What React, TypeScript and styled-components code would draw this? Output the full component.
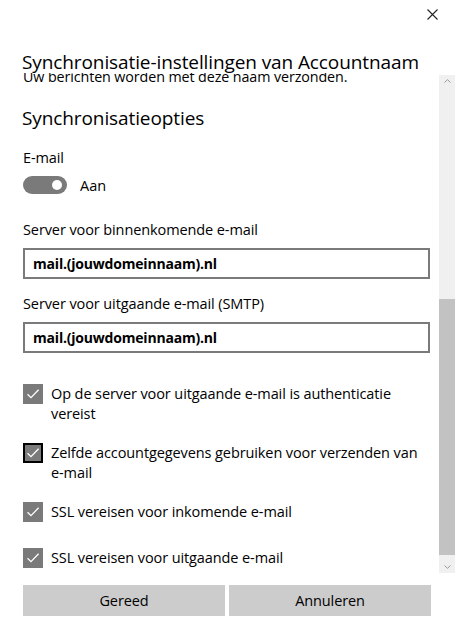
import * as React from 'react';
import styled, { createGlobalStyle } from 'styled-components';

const GlobalStyle = createGlobalStyle`
  html, body {
    margin: 0;
    padding: 0;
    background: #ffffff;
  }
  body {
    font-family: 'Open Sans', 'Noto Sans', sans-serif;
    color: #000000;
  }
`;

const Page = styled.div`
  width: 455px;
  height: 626px;
  display: flex;
  flex-direction: column;
  background: #ffffff;
  overflow: hidden;
`;

const TopBar = styled.div`
  height: 28px;
  display: flex;
  justify-content: flex-end;
  align-items: center;
  padding-right: 16px;
`;

const CloseButton = styled.button`
  width: 14px;
  height: 14px;
  padding: 0;
  border: none;
  background: transparent;
  display: flex;
  align-items: center;
  justify-content: center;
`;

const Title = styled.h1`
  margin: 22px 0 0 22px;
  font-size: 19px;
  font-weight: 400;
  line-height: 24px;
  height: 23px;
  letter-spacing: -0.1px;
  white-space: nowrap;
`;

const Body = styled.div`
  display: flex;
  height: 500px;
`;

const Viewport = styled.div`
  flex: 1;
  overflow: hidden;
  padding-left: 23px;
  padding-right: 9px;
`;

const Scrolled = styled.div`
  margin-top: -5px;
`;

const Hint = styled.p`
  margin: 0;
  font-size: 14.3px;
  line-height: 18px;
  letter-spacing: -0.1px;
`;

const SectionTitle = styled.h2`
  margin: 19px 0 0 -1px;
  font-size: 19px;
  font-weight: 400;
  line-height: 26px;
  letter-spacing: -0.1px;
`;

const FieldLabel = styled.div<{ $top: number }>`
  margin-top: ${(p) => p.$top}px;
  font-size: 14.5px;
  line-height: 20px;
  letter-spacing: -0.1px;
`;

const ToggleRow = styled.label`
  margin-top: 7px;
  display: flex;
  align-items: center;
  gap: 13px;
  font-size: 14.5px;
  height: 20px;
`;

const ToggleTrack = styled.span`
  width: 44px;
  height: 18px;
  border-radius: 9px;
  background: #7a7a7a;
  display: flex;
  align-items: center;
  justify-content: flex-end;
  padding-right: 5px;
  box-sizing: border-box;
`;

const ToggleKnob = styled.span`
  width: 10px;
  height: 10px;
  border-radius: 50%;
  background: #ffffff;
`;

const TextBox = styled.div`
  margin-top: 8px;
  height: 31px;
  box-sizing: border-box;
  border: 2px solid #7a7a7a;
  display: flex;
  align-items: center;
  padding-left: 8px;
  font-size: 14px;
  font-weight: 700;
  letter-spacing: -0.2px;
`;

const CheckRow = styled.div<{ $top: number }>`
  margin-top: ${(p) => p.$top}px;
  display: flex;
  align-items: flex-start;
  gap: 8px;
`;

const CheckBox = styled.span<{ $focused?: boolean }>`
  flex: none;
  width: 20px;
  height: 20px;
  box-sizing: border-box;
  background: #7a7a7a;
  border: ${(p) => (p.$focused ? '2px solid #000000' : 'none')};
  display: flex;
  align-items: center;
  justify-content: center;
`;

const CheckText = styled.span`
  font-size: 14.5px;
  line-height: 20px;
  letter-spacing: -0.1px;
`;

const ScrollBar = styled.div`
  width: 16px;
  background: #f0f0f0;
  display: flex;
  flex-direction: column;
  align-items: center;
  margin-top: 2px;
  height: 498px;
`;

const ArrowCell = styled.div`
  height: 12px;
  width: 100%;
  display: flex;
  align-items: center;
  justify-content: center;
  flex: none;
`;

const ScrollSpace = styled.div<{ $size: number }>`
  height: ${(p) => p.$size}px;
  flex: none;
`;

const ScrollThumb = styled.div`
  width: 100%;
  height: 256px;
  background: #c2c2c2;
  flex: none;
`;

const Footer = styled.div`
  display: grid;
  grid-template-columns: 1fr 1fr;
  gap: 4px;
  padding: 12px 24px 0 23px;
`;

const FooterButton = styled.button`
  height: 31px;
  border: none;
  background: #cccccc;
  font-family: inherit;
  font-size: 14.5px;
  color: #000000;
  letter-spacing: -0.1px;
`;

const Check = () => (
  <svg width="14" height="14" viewBox="0 0 14 14">
    <path d="M1.5 7.2 L5 10.6 L12.6 2.8" fill="none" stroke="#ffffff" strokeWidth="1.3" />
  </svg>
);

const Chevron = ({ up }: { up?: boolean }) => (
  <svg width="7" height="4" viewBox="0 0 7 4">
    <path d={up ? 'M0.5 3.5 L3.5 0.7 L6.5 3.5' : 'M0.5 0.5 L3.5 3.3 L6.5 0.5'} fill="none" stroke="#9a9a9a" strokeWidth="1" />
  </svg>
);

const options = [
  { text: 'Op de server voor uitgaande e-mail is authenticatie vereist', top: 31 },
  { text: 'Zelfde accountgegevens gebruiken voor verzenden van e-mail', top: 19, focused: true },
  { text: 'SSL vereisen voor inkomende e-mail', top: 19 },
  { text: 'SSL vereisen voor uitgaande e-mail', top: 26 },
];

export default function App() {
  return (
    <>
      <GlobalStyle />
      <Page>
        <TopBar>
          <CloseButton aria-label="Sluiten">
            <svg width="11" height="11" viewBox="0 0 11 11">
              <path d="M0.5 0.5 L10.5 10.5 M10.5 0.5 L0.5 10.5" stroke="#222222" strokeWidth="1.1" />
            </svg>
          </CloseButton>
        </TopBar>
        <Title>Synchronisatie-instellingen van Accountnaam</Title>
        <Body>
          <Viewport>
            <Scrolled>
              <Hint>Uw berichten worden met deze naam verzonden.</Hint>
              <SectionTitle>Synchronisatieopties</SectionTitle>
              <FieldLabel $top={17}>E-mail</FieldLabel>
              <ToggleRow>
                <ToggleTrack>
                  <ToggleKnob />
                </ToggleTrack>
                Aan
              </ToggleRow>
              <FieldLabel $top={25}>Server voor binnenkomende e-mail</FieldLabel>
              <TextBox>mail.(jouwdomeinnaam).nl</TextBox>
              <FieldLabel $top={15}>Server voor uitgaande e-mail (SMTP)</FieldLabel>
              <TextBox>mail.(jouwdomeinnaam).nl</TextBox>
              {options.map((o) => (
                <CheckRow key={o.text} $top={o.top}>
                  <CheckBox $focused={o.focused}>
                    <Check />
                  </CheckBox>
                  <CheckText>{o.text}</CheckText>
                </CheckRow>
              ))}
            </Scrolled>
          </Viewport>
          <ScrollBar>
            <ArrowCell>
              <Chevron up />
            </ArrowCell>
            <ScrollSpace $size={212} />
            <ScrollThumb />
            <ScrollSpace $size={6} />
            <ArrowCell>
              <Chevron />
            </ArrowCell>
          </ScrollBar>
        </Body>
        <Footer>
          <FooterButton>Gereed</FooterButton>
          <FooterButton>Annuleren</FooterButton>
        </Footer>
      </Page>
    </>
  );
}
